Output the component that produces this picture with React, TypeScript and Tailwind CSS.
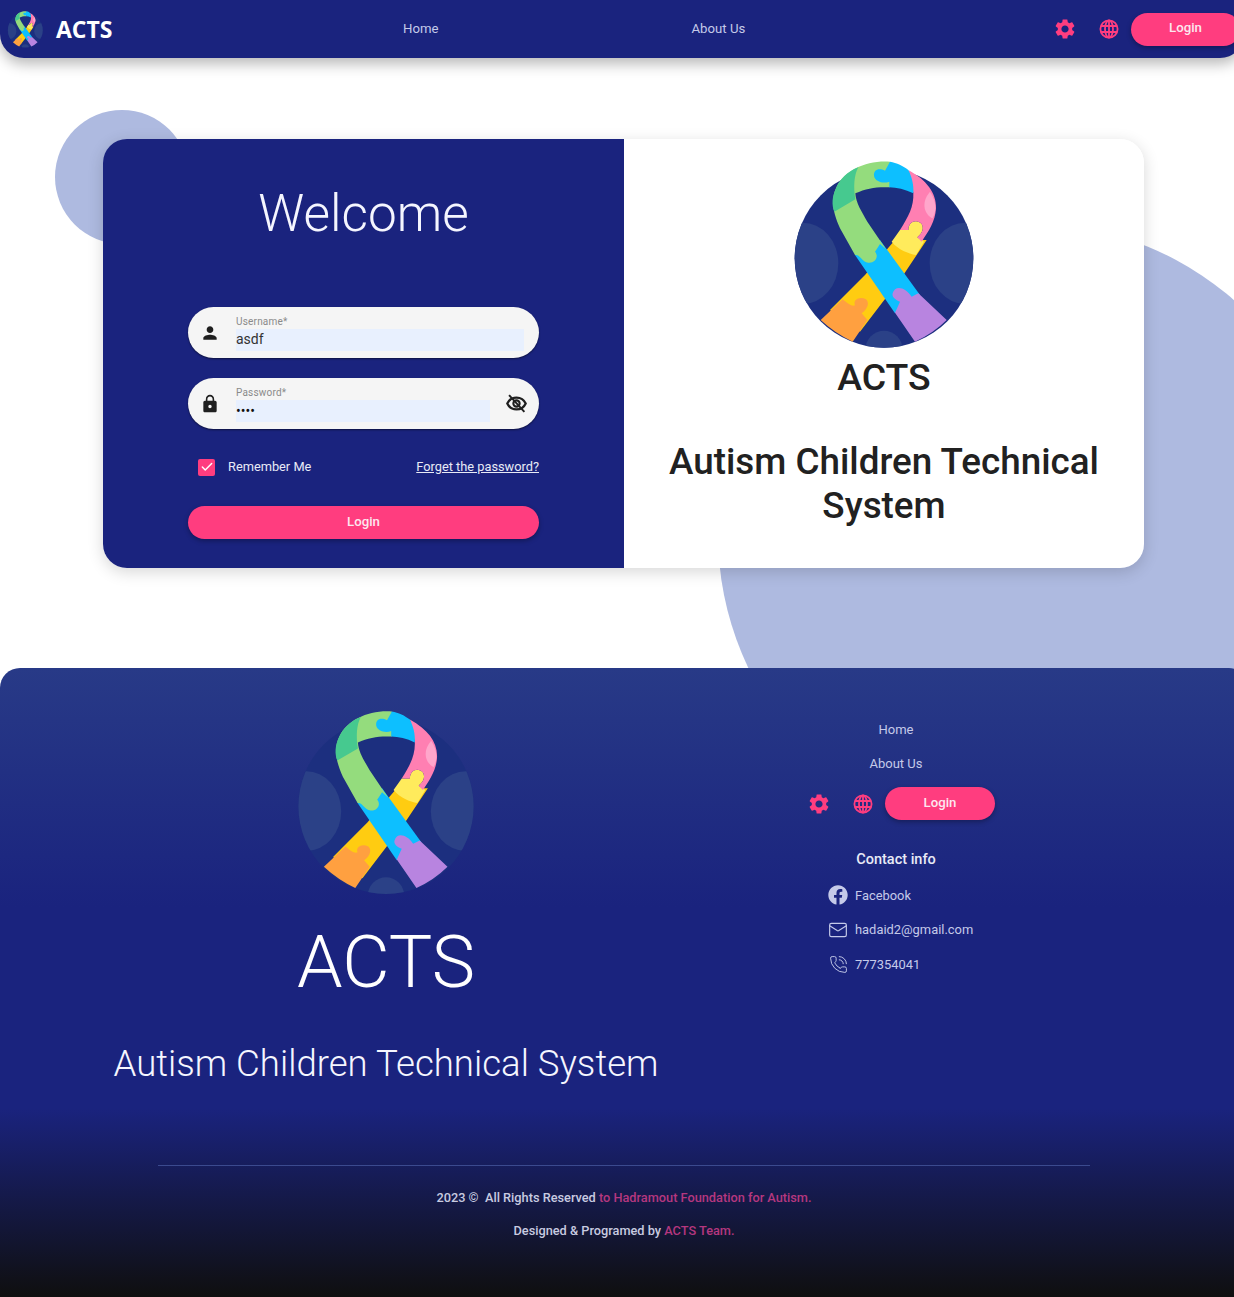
import { FaFacebook } from 'react-icons/fa';
import { Check, Mail, PhoneCall } from 'lucide-react';
import { MdLock, MdPerson } from 'react-icons/md';

function Ribbon({ className }: { className: string }) {
  return (
    <svg viewBox="0 0 630 630" className={className}>
      <defs>
        <clipPath id="disc">
          <circle cx="312" cy="325" r="268" />
        </clipPath>
      </defs>
      <circle cx="312" cy="325" r="268" fill="#1c2f7f" />
      <g clipPath="url(#disc)" fill="#2b4187">
        <ellipse cx="68" cy="340" rx="107" ry="122" />
        <ellipse cx="556" cy="340" rx="107" ry="122" />
        <ellipse cx="312" cy="600" rx="56" ry="58" />
      </g>
      {/* back strand */}
      <path d="M150 480 L255 375 L345 270 L440 270 L370 375 L240 545 Z" fill="#ffcc11" />
      <path d="M122 510 L188 448 C205 462 215 470 225 466 C218 448 240 438 258 448 C270 460 262 478 245 490 L262 510 L218 575 Q165 550 122 510 Z" fill="#ffa040" />
      <path d="M360 240 L385 240 C385 215 410 205 425 222 C435 240 420 255 412 262 L432 275 L408 315 C385 310 355 300 335 275 Z" fill="#ffeb5c" />
      <path d="M385 60 C440 90 470 130 468 175 C466 215 445 245 425 275 L412 262 C420 255 435 240 425 222 C410 205 385 215 385 240 L360 240 C385 200 402 170 400 128 Z" fill="#ff7fb2" />
      <path d="M450 125 C460 140 468 160 466 180 Q465 190 458 205 C435 195 420 160 450 125 Z" fill="#ffa6cb" />
      {/* front strand */}
      <path d="M225 315 L300 270 L420 435 L345 490 Z" fill="#0dbfff" />
      <path d="M330 35 C260 30 195 60 170 110 C150 150 160 190 180 235 L225 315 C240 312 245 335 265 338 C285 340 298 320 285 305 L300 282 L318 298 L262 215 C245 185 228 160 226 130 C260 115 290 110 330 112 Z" fill="#94dc7d" />
      <path d="M235 52 C200 65 180 90 170 110 C155 140 155 165 163 185 L226 148 C220 110 222 75 235 52 Z" fill="#46c98f" />
      <path d="M330 35 C350 38 370 48 385 60 C395 80 402 105 400 130 C375 118 350 113 328 112 L328 95 C310 102 285 95 282 78 C280 60 295 52 315 62 Z" fill="#0dbfff" />
      <path d="M338 430 C345 405 375 410 395 440 L415 430 L500 510 Q460 550 405 575 L345 488 L360 455 C345 450 335 440 338 430 Z" fill="#b884e0" />
    </svg>
  );
}

function Gear() {
  return (
    <svg viewBox="0 0 24 24" className="h-6 w-6 fill-[#ff3d7f]">
      <path d="M19.14 12.94c.04-.3.06-.61.06-.94 0-.32-.02-.64-.07-.94l2.03-1.58c.18-.14.23-.41.12-.61l-1.92-3.32c-.12-.22-.37-.29-.59-.22l-2.39.96c-.5-.38-1.03-.7-1.62-.94l-.36-2.54c-.04-.24-.24-.41-.48-.41h-3.84c-.24 0-.43.17-.47.41l-.36 2.54c-.59.24-1.13.57-1.62.94l-2.39-.96c-.22-.08-.47 0-.59.22L2.74 8.87c-.12.21-.08.47.12.61l2.03 1.58c-.05.3-.09.63-.09.94s.02.64.07.94l-2.03 1.58c-.18.14-.23.41-.12.61l1.92 3.32c.12.22.37.29.59.22l2.39-.96c.5.38 1.03.7 1.62.94l.36 2.54c.05.24.24.41.48.41h3.84c.24 0 .44-.17.47-.41l.36-2.54c.59-.24 1.13-.56 1.62-.94l2.39.96c.22.08.47 0 .59-.22l1.92-3.32c.12-.22.07-.47-.12-.61l-2.01-1.58zM12 15.6c-1.98 0-3.6-1.62-3.6-3.6s1.62-3.6 3.6-3.6 3.6 1.62 3.6 3.6-1.62 3.6-3.6 3.6z" />
    </svg>
  );
}

function Globe() {
  return (
    <svg viewBox="0 0 20 20" className="h-5 w-5 fill-none stroke-[#ff3d7f] stroke-[1.8]">
      <circle cx="10" cy="10" r="8.6" />
      <ellipse cx="10" cy="10" rx="4" ry="8.6" />
      <path d="M10 1.4V18.6M2 7H18M2 13H18" />
    </svg>
  );
}

function EyeOff() {
  return (
    <svg viewBox="0 0 24 24" className="ml-[16px] h-[21px] w-[21px] shrink-0 fill-none stroke-[#1f1f1f]">
      <path d="M1.5 12C3.5 7.6 7.4 5.2 12 5.2S20.5 7.6 22.5 12C20.5 16.4 16.6 18.8 12 18.8S3.500 16.400 1.500 12Z" strokeWidth="2.6" />
      <circle cx="12" cy="12" r="3.6" strokeWidth="2.4" />
      <path d="M3.500 2.500L21 21.500" strokeWidth="2.2" />
    </svg>
  );
}

function NavActions({ buttonClass }: { buttonClass: string }) {
  return (
    <div className="flex items-center">
      <div className="flex w-11 justify-center">
        <Gear />
      </div>
      <div className="flex w-11 justify-center">
        <Globe />
      </div>
      <button className={`h-[33px] rounded-full bg-[#ff3d7f] pb-[2px] text-[13.2px] font-medium text-[#fde7ef] shadow-[0_2px_5px_rgba(0,0,0,0.3)] ${buttonClass}`}>
        Login
      </button>
    </div>
  );
}

function Header() {
  return (
    <header className="relative z-20 flex h-[58px] w-[1244px] items-center rounded-b-[24px] bg-[#1a237e] shadow-[0_6px_14px_rgba(0,0,0,0.28)]">
      <div className="flex w-[340px] items-center pl-[5px]">
        <Ribbon className="h-[41px] w-[41px]" />
        <span className="ml-[10px] font-['Open_Sans',sans-serif] text-[23px] font-bold text-white">ACTS</span>
      </div>
      <nav className="flex flex-1 text-[13.2px] text-[#c5cae9]">
        <a className="ml-[63px]">Home</a>
        <a className="ml-[253px]">About Us</a>
      </nav>
      <div className="mr-[4px]">
        <NavActions buttonClass="w-[109px]" />
      </div>
    </header>
  );
}

function LoginPanel() {
  return (
    <div className="flex w-[521px] flex-col items-center bg-[#1a237e] pt-[39px]">
      <h1 className="text-[51.3px] leading-[72px] font-light text-[#f5f6ff]">Welcome</h1>
      <div className="mt-[57px] flex w-[351px] flex-col">
        <div className="flex h-[51px] items-center rounded-full bg-[#f5f5f5] pr-[15px] pl-[12px] shadow-[0_1px_2px_rgba(0,0,0,0.5)]">
          <MdPerson className="h-5 w-5 text-[#1f1f1f]" />
          <div className="ml-[16px] flex-1">
            <div className="text-[10px] leading-[14px] tracking-[0.2px] text-[#8a8a8a]">Username*</div>
            <input readOnly value="asdf" className="block h-[22px] w-full bg-[#e8f0fe] pb-[2px] text-[14px] text-[#333] outline-none" />
          </div>
        </div>
        <div className="mt-[20px] flex h-[51px] items-center rounded-full bg-[#f5f5f5] pr-[12px] pl-[12px] shadow-[0_1px_2px_rgba(0,0,0,0.5)]">
          <MdLock className="h-5 w-5 text-[#1f1f1f]" />
          <div className="ml-[16px] min-w-0 flex-1">
            <div className="text-[10px] leading-[14px] tracking-[0.2px] text-[#8a8a8a]">Password*</div>
            <input readOnly type="password" value="asdf" className="block h-[22px] w-full bg-[#e8f0fe] text-[14px] text-[#111] outline-none" />
          </div>
          <EyeOff />
        </div>
        <div className="mt-[29px] flex items-center justify-between text-[12.8px] leading-[18px] text-[#e8eaf6]">
          <div className="flex items-center">
            <span className="ml-[10px] flex h-[17px] w-[17px] items-center justify-center rounded-[2px] bg-[#ff3d7f]">
              <Check className="h-[14px] w-[14px] text-white" strokeWidth={2.5} />
            </span>
            <span className="ml-[13px]">Remember Me</span>
          </div>
          <a className="underline">Forget the password?</a>
        </div>
        <button className="mt-[30px] h-[33px] rounded-full bg-[#ff3d7f] pb-[2px] text-[13.2px] font-medium text-[#fde7ef] shadow-[0_2px_5px_rgba(0,0,0,0.3)]">
          Login
        </button>
      </div>
    </div>
  );
}

function BrandPanel() {
  return (
    <div className="flex flex-1 flex-col items-center bg-white pt-[11px] text-[#212121]">
      <Ribbon className="ml-[2px] h-[210px] w-[210px] shrink-0" />
      <div className="mt-[-5px] text-[37.4px] leading-[44px] font-medium">ACTS</div>
      <h2 className="mt-[41px] w-[460px] text-center text-[36.8px] leading-[44px] font-medium">
        Autism Children Technical System
      </h2>
    </div>
  );
}

function ContactRow({ icon, label }: { icon: React.ReactNode; label: string }) {
  return (
    <div className="flex h-[34.5px] items-center text-[12.9px] whitespace-nowrap text-[#c5cae9]">
      <span className="flex w-5 shrink-0 justify-center">{icon}</span>
      <span className="ml-[7px]">{label}</span>
    </div>
  );
}

function Footer() {
  return (
    <footer className="relative z-10 h-[629px] w-[1249px] rounded-t-[20px] bg-[linear-gradient(180deg,#283a87_0%,#1a237e_38%,#1a237e_70%,#0f0f0f_100%)]">
      <div className="flex h-[497px]">
        <div className="flex w-[772px] flex-col items-center pt-[32px]">
          <Ribbon className="ml-[2px] h-[206px] w-[206px] shrink-0" />
          <div className="mt-[14px] text-[73px] leading-[84px] font-light text-white">ACTS</div>
          <div className="mt-[32px] text-[36.6px] leading-[56px] font-light text-[#f5f6ff]">Autism Children Technical System</div>
        </div>
        <div className="flex w-[248px] flex-col items-center pt-[45px]">
          <a className="text-[13px] leading-[34px] text-[#c5cae9]">Home</a>
          <a className="text-[13px] leading-[34px] text-[#c5cae9]">About Us</a>
          <div className="mt-[6px]">
            <NavActions buttonClass="w-[110px]" />
          </div>
          <div className="mt-[28px] text-[14.5px] leading-[24px] font-medium text-[#e8eaf6]">Contact info</div>
          <div className="mt-[6px] ml-[56px] self-start">
            <ContactRow icon={<FaFacebook className="h-5 w-5" />} label="Facebook" />
            <ContactRow icon={<Mail className="h-5 w-5" strokeWidth={1.4} />} label="hadaid2@gmail.com" />
            <ContactRow icon={<PhoneCall className="h-[19px] w-[19px]" strokeWidth={1.2} />} label="777354041" />
          </div>
        </div>
      </div>
      <div className="mx-[158px] w-[932px] border-t border-[#3b4a8f] pt-[15px] text-center text-[12.75px] leading-[33px] font-medium text-[#c8cbe0]">
        <div>
          2023 ©&nbsp; All Rights Reserved <span className="text-[#b5377f]">to Hadramout Foundation for Autism.</span>
        </div>
        <div>
          Designed &amp; Programed by <span className="text-[#b5377f]">ACTS Team.</span>
        </div>
      </div>
    </footer>
  );
}

export default function App() {
  return (
    <div className="w-full overflow-hidden bg-white font-['Roboto',sans-serif]">
      <Header />
      <main className="relative h-[610px] pt-[81px]">
        <div className="absolute top-[52px] left-[55px] h-[134px] w-[134px] rounded-full bg-[#aebae0]" />
        <div className="absolute top-[165px] left-[718px] h-[622px] w-[622px] rounded-full bg-[#aebae0]" />
        <div className="relative ml-[103px] flex h-[429px] w-[1041px] overflow-hidden rounded-[24px] shadow-[0_4px_16px_rgba(0,0,0,0.16)]">
          <LoginPanel />
          <BrandPanel />
        </div>
      </main>
      <Footer />
    </div>
  );
}
